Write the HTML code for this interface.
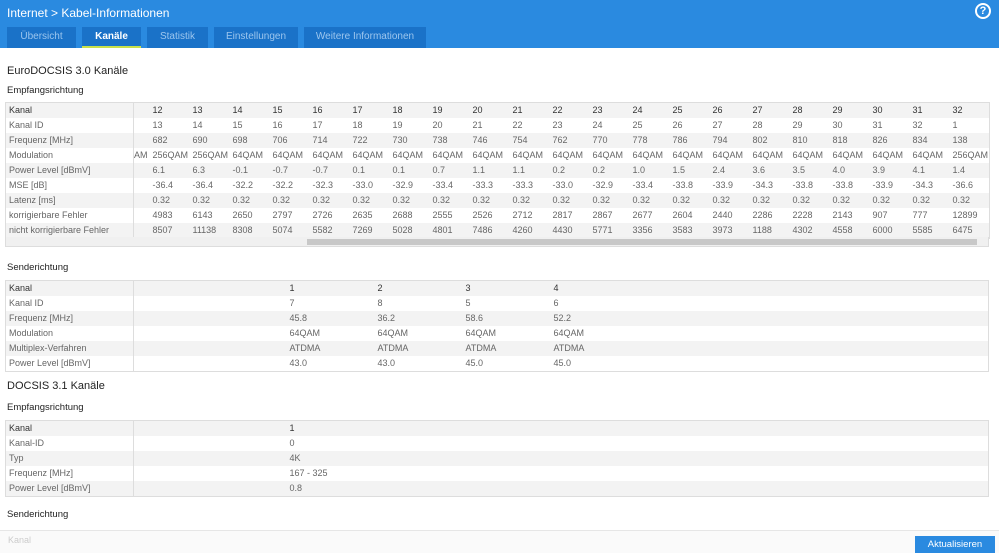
<!DOCTYPE html>
<html><head><meta charset="utf-8"><style>
*{margin:0;padding:0;box-sizing:border-box}
body{width:999px;height:553px;overflow:hidden;background:#fff;font-family:"Liberation Sans",sans-serif;color:#666;font-size:9px;position:relative}
.hdr{position:absolute;left:0;top:0;width:999px;height:48px;background:#2a8ae0}
.title{position:absolute;left:7px;top:6px;color:#fff;font-size:12px}
.help{position:absolute;left:975px;top:3px;width:16px;height:16px;border:2px solid #fff;border-radius:50%;color:#fff;font-size:11px;font-weight:bold;text-align:center;line-height:12px}
.tab{position:absolute;top:27px;height:21px;background:#1a72c8;color:#9cc6ee;font-size:10px;text-align:center;line-height:20px}
.tab.act{color:#fff;font-weight:bold}
.tab.act:after{content:"";position:absolute;left:0;right:0;bottom:0;height:2px;background:#c8e04a}
h2{position:absolute;left:7px;font-size:11px;color:#222;font-weight:normal}
h3{position:absolute;left:7px;font-size:9.5px;color:#222;font-weight:normal}
table{position:absolute;left:5px;border-collapse:collapse;table-layout:fixed;border:1px solid #ddd}
td{height:15px;padding:0 0 0 3px;white-space:nowrap;overflow:hidden;font-size:9px;line-height:15px}
tr:nth-child(odd){background:#f3f3f3}
td.l{border-right:1px solid #ddd}
tr.k td{color:#333}
.sb{position:absolute;left:5px;top:237px;width:984px;height:10px;background:#f0f0f0;border:1px solid #ddd;border-top:none}
.th{position:absolute;left:307px;top:239px;width:670px;height:6px;background:#c8c8c8}
.btn{position:absolute;left:915px;top:536px;width:80px;height:17px;background:#2a8ae0;color:#fff;font-size:9.5px;text-align:center;line-height:17px}
</style></head><body>
<div class="hdr"></div>
<div class="title">Internet &gt; Kabel-Informationen</div>
<div class="help">?</div>
<div class="tab" style="left:7px;width:69px">Übersicht</div>
<div class="tab act" style="left:82px;width:59px">Kanäle</div>
<div class="tab" style="left:147px;width:61px">Statistik</div>
<div class="tab" style="left:214px;width:84px">Einstellungen</div>
<div class="tab" style="left:304px;width:122px">Weitere Informationen</div>

<h2 style="top:65px">EuroDOCSIS 3.0 Kanäle</h2>
<h3 style="top:85px">Empfangsrichtung</h3>
<table style="top:102px;width:984px">
<colgroup><col style="width:128px"><col style="width:16px"><col span="21" style="width:40px"></colgroup>
<tr class="k"><td class="l">Kanal</td><td></td><td>12</td><td>13</td><td>14</td><td>15</td><td>16</td><td>17</td><td>18</td><td>19</td><td>20</td><td>21</td><td>22</td><td>23</td><td>24</td><td>25</td><td>26</td><td>27</td><td>28</td><td>29</td><td>30</td><td>31</td><td>32</td></tr>
<tr><td class="l">Kanal ID</td><td></td><td>13</td><td>14</td><td>15</td><td>16</td><td>17</td><td>18</td><td>19</td><td>20</td><td>21</td><td>22</td><td>23</td><td>24</td><td>25</td><td>26</td><td>27</td><td>28</td><td>29</td><td>30</td><td>31</td><td>32</td><td>1</td></tr>
<tr><td class="l">Frequenz [MHz]</td><td></td><td>682</td><td>690</td><td>698</td><td>706</td><td>714</td><td>722</td><td>730</td><td>738</td><td>746</td><td>754</td><td>762</td><td>770</td><td>778</td><td>786</td><td>794</td><td>802</td><td>810</td><td>818</td><td>826</td><td>834</td><td>138</td></tr>
<tr><td class="l">Modulation</td><td style="padding:0">AM</td><td>256QAM</td><td>256QAM</td><td>64QAM</td><td>64QAM</td><td>64QAM</td><td>64QAM</td><td>64QAM</td><td>64QAM</td><td>64QAM</td><td>64QAM</td><td>64QAM</td><td>64QAM</td><td>64QAM</td><td>64QAM</td><td>64QAM</td><td>64QAM</td><td>64QAM</td><td>64QAM</td><td>64QAM</td><td>64QAM</td><td>256QAM</td></tr>
<tr><td class="l">Power Level [dBmV]</td><td></td><td>6.1</td><td>6.3</td><td>-0.1</td><td>-0.7</td><td>-0.7</td><td>0.1</td><td>0.1</td><td>0.7</td><td>1.1</td><td>1.1</td><td>0.2</td><td>0.2</td><td>1.0</td><td>1.5</td><td>2.4</td><td>3.6</td><td>3.5</td><td>4.0</td><td>3.9</td><td>4.1</td><td>1.4</td></tr>
<tr><td class="l">MSE [dB]</td><td></td><td>-36.4</td><td>-36.4</td><td>-32.2</td><td>-32.2</td><td>-32.3</td><td>-33.0</td><td>-32.9</td><td>-33.4</td><td>-33.3</td><td>-33.3</td><td>-33.0</td><td>-32.9</td><td>-33.4</td><td>-33.8</td><td>-33.9</td><td>-34.3</td><td>-33.8</td><td>-33.8</td><td>-33.9</td><td>-34.3</td><td>-36.6</td></tr>
<tr><td class="l">Latenz [ms]</td><td></td><td>0.32</td><td>0.32</td><td>0.32</td><td>0.32</td><td>0.32</td><td>0.32</td><td>0.32</td><td>0.32</td><td>0.32</td><td>0.32</td><td>0.32</td><td>0.32</td><td>0.32</td><td>0.32</td><td>0.32</td><td>0.32</td><td>0.32</td><td>0.32</td><td>0.32</td><td>0.32</td><td>0.32</td></tr>
<tr><td class="l">korrigierbare Fehler</td><td></td><td>4983</td><td>6143</td><td>2650</td><td>2797</td><td>2726</td><td>2635</td><td>2688</td><td>2555</td><td>2526</td><td>2712</td><td>2817</td><td>2867</td><td>2677</td><td>2604</td><td>2440</td><td>2286</td><td>2228</td><td>2143</td><td>907</td><td>777</td><td>12899</td></tr>
<tr><td class="l">nicht korrigierbare Fehler</td><td></td><td>8507</td><td>11138</td><td>8308</td><td>5074</td><td>5582</td><td>7269</td><td>5028</td><td>4801</td><td>7486</td><td>4260</td><td>4430</td><td>5771</td><td>3356</td><td>3583</td><td>3973</td><td>1188</td><td>4302</td><td>4558</td><td>6000</td><td>5585</td><td>6475</td></tr>
</table>
<div class="sb"></div><div class="th"></div>

<h3 style="top:262px">Senderichtung</h3>
<table style="top:280px;width:984px">
<colgroup><col style="width:128px"><col style="width:153px"><col style="width:88px"><col style="width:88px"><col style="width:88px"><col></colgroup>
<tr class="k"><td class="l">Kanal</td><td></td><td>1</td><td>2</td><td>3</td><td>4</td></tr>
<tr><td class="l">Kanal ID</td><td></td><td>7</td><td>8</td><td>5</td><td>6</td></tr>
<tr><td class="l">Frequenz [MHz]</td><td></td><td>45.8</td><td>36.2</td><td>58.6</td><td>52.2</td></tr>
<tr><td class="l">Modulation</td><td></td><td>64QAM</td><td>64QAM</td><td>64QAM</td><td>64QAM</td></tr>
<tr><td class="l">Multiplex-Verfahren</td><td></td><td>ATDMA</td><td>ATDMA</td><td>ATDMA</td><td>ATDMA</td></tr>
<tr><td class="l">Power Level [dBmV]</td><td></td><td>43.0</td><td>43.0</td><td>45.0</td><td>45.0</td></tr>
</table>

<h2 style="top:380px">DOCSIS 3.1 Kanäle</h2>
<h3 style="top:402px">Empfangsrichtung</h3>
<table style="top:420px;width:984px">
<colgroup><col style="width:128px"><col style="width:153px"><col></colgroup>
<tr class="k"><td class="l">Kanal</td><td></td><td>1</td></tr>
<tr><td class="l">Kanal-ID</td><td></td><td>0</td></tr>
<tr><td class="l">Typ</td><td></td><td>4K</td></tr>
<tr><td class="l">Frequenz [MHz]</td><td></td><td>167 - 325</td></tr>
<tr><td class="l">Power Level [dBmV]</td><td></td><td>0.8</td></tr>
</table>

<h3 style="top:509px">Senderichtung</h3>
<div style="position:absolute;left:0;top:530px;width:999px;height:23px;background:#fafafa;border-top:1px solid #e6e6e6"></div>
<div style="position:absolute;left:8px;top:535px;color:#ccc;font-size:9px">Kanal</div>
<div class="btn">Aktualisieren</div>
</body></html>
